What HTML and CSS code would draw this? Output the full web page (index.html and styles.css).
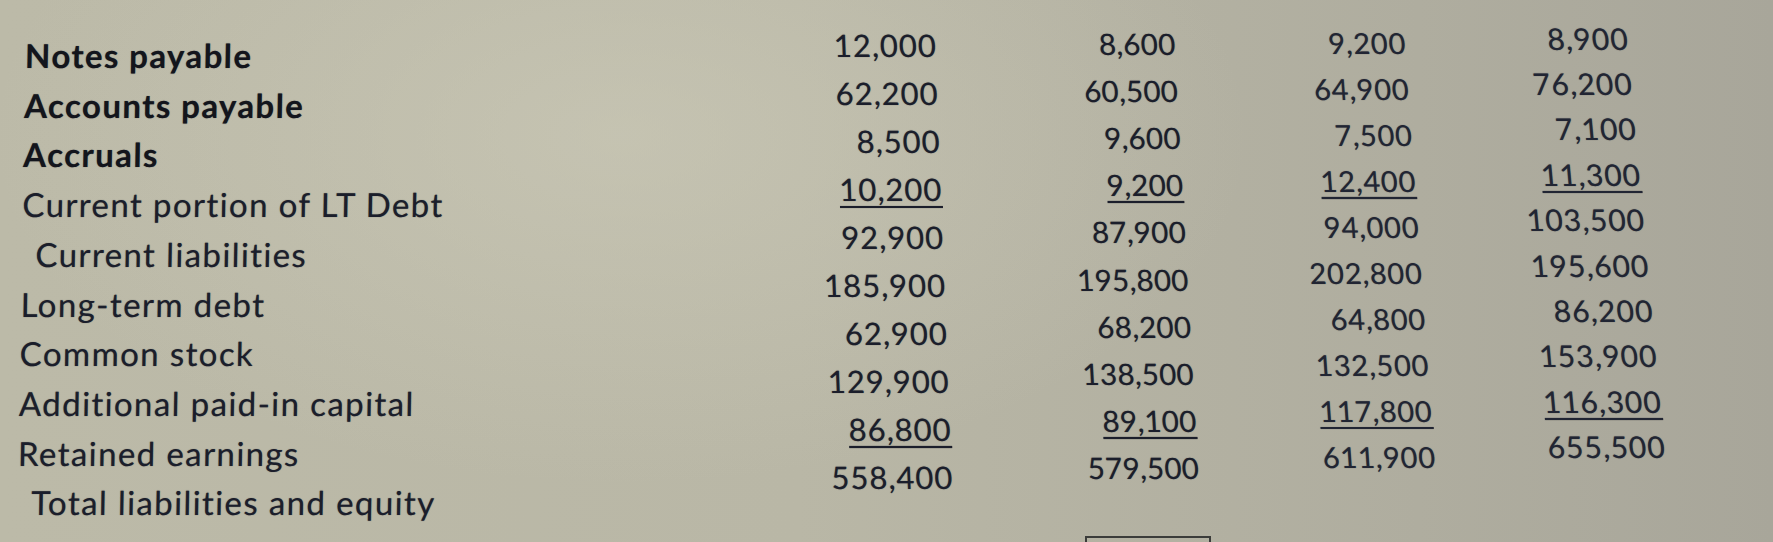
FILE: index.html
```html
<!DOCTYPE html>
<html lang="en">
<head>
<meta charset="utf-8">
<title>Balance sheet</title>
<link rel="stylesheet" href="styles.css">
</head>
<body>
<div class="screen">
  <div class="sheet">
    <div class="col labels">
      <div class="cell strong">Notes payable</div>
      <div class="cell strong">Accounts payable</div>
      <div class="cell strong">Accruals</div>
      <div class="cell">Current portion of LT Debt</div>
      <div class="cell indent">Current liabilities</div>
      <div class="cell">Long-term debt</div>
      <div class="cell">Common stock</div>
      <div class="cell">Additional paid-in capital</div>
      <div class="cell">Retained earnings</div>
      <div class="cell indent">Total liabilities and equity</div>
    </div>
    <div class="col num c1">
      <div class="cell">12,000</div>
      <div class="cell">62,200</div>
      <div class="cell">8,500</div>
      <div class="cell"><span class="u">10,200</span></div>
      <div class="cell">92,900</div>
      <div class="cell">185,900</div>
      <div class="cell">62,900</div>
      <div class="cell">129,900</div>
      <div class="cell"><span class="u">86,800</span></div>
      <div class="cell">558,400</div>
    </div>
    <div class="col num c2">
      <div class="cell">8,600</div>
      <div class="cell">60,500</div>
      <div class="cell">9,600</div>
      <div class="cell"><span class="u">9,200</span></div>
      <div class="cell">87,900</div>
      <div class="cell">195,800</div>
      <div class="cell">68,200</div>
      <div class="cell">138,500</div>
      <div class="cell"><span class="u">89,100</span></div>
      <div class="cell">579,500</div>
    </div>
    <div class="col num c3">
      <div class="cell">9,200</div>
      <div class="cell">64,900</div>
      <div class="cell">7,500</div>
      <div class="cell"><span class="u">12,400</span></div>
      <div class="cell">94,000</div>
      <div class="cell">202,800</div>
      <div class="cell">64,800</div>
      <div class="cell">132,500</div>
      <div class="cell"><span class="u">117,800</span></div>
      <div class="cell">611,900</div>
    </div>
    <div class="col num c4">
      <div class="cell">8,900</div>
      <div class="cell">76,200</div>
      <div class="cell">7,100</div>
      <div class="cell"><span class="u">11,300</span></div>
      <div class="cell">103,500</div>
      <div class="cell">195,600</div>
      <div class="cell">86,200</div>
      <div class="cell">153,900</div>
      <div class="cell"><span class="u">116,300</span></div>
      <div class="cell">655,500</div>
    </div>
  </div>
  <div class="cellbox"></div>
</div>
</body>
</html>
```

FILE: styles.css
```css
html, body {
  margin: 0;
  padding: 0;
}

body {
  width: 1773px;
  height: 542px;
  overflow: hidden;
  font-family: Lato, "Open Sans", "Liberation Sans", sans-serif;
  color: #1b1e2b;
}

.screen {
  width: 1773px;
  height: 542px;
  overflow: hidden;
  background:
    radial-gradient(ellipse 900px 500px at 35% 25%, rgba(206, 204, 186, 0.55), rgba(206, 204, 186, 0) 70%),
    linear-gradient(90deg, #bcbaa8 0%, #b9b7a6 45%, #afad9f 80%, #a8a69a 100%);
}

.sheet {
  display: flex;
  align-items: flex-start;
  padding-left: 26px;
  height: 528px;
}

.col {
  display: flex;
  flex-direction: column;
}

.cell {
  white-space: nowrap;
  text-shadow: 0 0 1px rgba(20, 22, 32, 0.55);
}

.labels {
  width: 709px;
  padding-top: 31px;
  font-size: 33px;
  letter-spacing: 1.4px;
  line-height: 49.7px;
  transform: skewX(-1deg);
  transform-origin: left top;
}

.labels .strong {
  font-weight: 700;
  color: #13151c;
}

.labels .indent {
  padding-left: 14px;
}

.num {
  text-align: right;
}

.c1 {
  width: 200px;
  padding-top: 21px;
  font-size: 31px;
  letter-spacing: 1px;
  line-height: 48px;
  transform: skewX(2.2deg);
  transform-origin: right top;
}

.c2 {
  width: 238px;
  padding-top: 19.5px;
  font-size: 29.5px;
  letter-spacing: 0.3px;
  line-height: 47.2px;
  transform: skewX(3.2deg);
  transform-origin: right top;
}

.c3 {
  width: 230px;
  padding-top: 20px;
  font-size: 29px;
  letter-spacing: 0.8px;
  line-height: 46px;
  transform: skewX(4.1deg);
  transform-origin: right top;
  color: #212533;
}

.c4 {
  width: 222px;
  padding-top: 15.5px;
  font-size: 30px;
  letter-spacing: 1px;
  line-height: 45.4px;
  transform: skewX(5.2deg);
  transform-origin: right top;
  color: #212533;
}

.u {
  text-decoration: underline;
  text-decoration-thickness: 2px;
  text-underline-offset: 5px;
}

.cellbox {
  margin-left: 1085px;
  margin-top: 8px;
  width: 122px;
  height: 20px;
  border: 2px solid #3b3c3a;
  border-bottom: none;
}
```
